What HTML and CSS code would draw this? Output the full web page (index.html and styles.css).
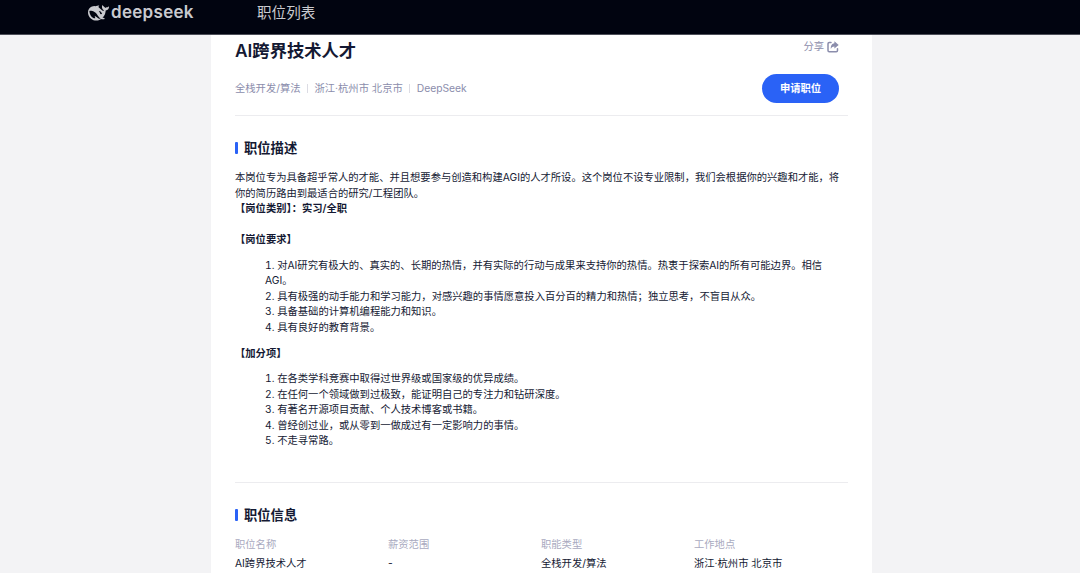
FILE: index.html
```
<!DOCTYPE html>
<html lang="zh-CN">
<head>
<meta charset="UTF-8">
<meta name="viewport" content="width=device-width, initial-scale=1.0">
<title>AI跨界技术人才</title>
<link rel="stylesheet" href="styles.css">
</head>
<body>
  <header class="header">
    <a class="logo">
      <svg class="logo-icon" viewBox="0 3.2 24 17.600">
        <path fill="currentColor" d="M23.748 4.482c-.254-.124-.364.113-.512.234-.051.039-.094.09-.137.136-.372.397-.806.657-1.373.626-.829-.046-1.537.214-2.163.848-.133-.782-.575-1.248-1.247-1.548-.352-.156-.708-.311-.955-.65-.172-.241-.219-.51-.305-.774-.055-.16-.11-.323-.293-.35-.2-.031-.278.136-.356.276-.313.572-.434 1.202-.422 1.84.027 1.436.633 2.58 1.838 3.393.137.093.172.187.129.323-.082.28-.18.552-.266.833-.055.179-.137.217-.329.14a5.526 5.526 0 01-1.736-1.18c-.857-.828-1.631-1.742-2.597-2.458a11.365 11.365 0 00-.689-.471c-.985-.957.13-1.743.388-1.836.27-.098.093-.432-.779-.428-.872.004-1.67.295-2.687.684a3.055 3.055 0 01-.465.137 9.597 9.597 0 00-2.883-.102c-1.885.21-3.39 1.102-4.497 2.623C.082 8.606-.231 10.684.152 12.85c.403 2.284 1.569 4.175 3.36 5.653 1.858 1.533 3.997 2.284 6.438 2.14 1.482-.085 3.133-.284 4.994-1.86.47.234.962.327 1.78.397.63.059 1.236-.03 1.705-.128.735-.156.684-.837.419-.961-2.155-1.004-1.682-.595-2.113-.926 1.096-1.296 2.746-2.642 3.392-7.003.05-.347.007-.565 0-.845-.004-.17.035-.237.23-.256a4.173 4.173 0 001.545-.475c1.396-.763 1.96-2.015 2.093-3.517.02-.23-.004-.467-.247-.588zM11.581 18c-2.089-1.642-3.102-2.183-3.52-2.16-.392.024-.321.471-.235.763.09.288.207.486.371.739.114.167.192.416-.113.603-.673.416-1.842-.14-1.897-.167-1.361-.802-2.5-1.86-3.301-3.307-.774-1.393-1.224-2.887-1.298-4.482-.02-.386.093-.522.477-.592a4.696 4.696 0 011.529-.039c2.132.312 3.946 1.265 5.468 2.774.868.86 1.525 1.887 2.202 2.891.72 1.066 1.494 2.082 2.48 2.914.348.292.625.514.891.677-.802.09-2.14.11-3.054-.614zm1-6.44a.306.306 0 01.415-.287.302.302 0 01.2.288.306.306 0 01-.31.307.303.303 0 01-.304-.308zm3.11 1.596c-.2.081-.399.151-.59.16a1.245 1.245 0 01-.798-.254c-.274-.23-.47-.358-.552-.758a1.73 1.73 0 01.016-.588c.07-.327-.008-.537-.239-.727-.187-.156-.426-.199-.688-.199a.559.559 0 01-.254-.078c-.11-.114-.2-.253-.114-.482.028-.054.16-.186.192-.21.356-.202.767-.136 1.146.016.352.144.618.408 1.001.782.391.451.462.576.685.914.176.265.336.537.445.848.067.195-.019.354-.25.452z"/>
      </svg>
      <span class="logo-text">deepseek</span>
    </a>
    <a class="nav-link">职位列表</a>
  </header>

  <main class="page">
    <div class="job-header">
      <div class="job-title-row">
        <h1>AI跨界技术人才</h1>
        <a class="share">分享
          <svg class="share-icon" viewBox="0 0 12 12" fill="none">
            <path stroke="currentColor" stroke-width="1.5" stroke-linecap="round" stroke-linejoin="round" d="M4 1.500H2.200Q1 1.500 1 2.700V9.600Q1 10.800 2.200 10.800H9.300Q10.500 10.800 10.500 9.600V7.800"/>
            <path fill="currentColor" d="M7.400.3 11.700 3.900 7.400 7.500V5.500C5.800 5.500 4.700 6.200 3.800 8 3.500 4.700 5 2.400 7.400 2.200z"/>
          </svg>
        </a>
      </div>
      <div class="job-meta-row">
        <div class="job-meta">
          <span>全栈开发/算法</span>
          <span>浙江·杭州市 北京市</span>
          <span>DeepSeek</span>
        </div>
        <button class="apply">申请职位</button>
      </div>
    </div>

    <section class="description">
      <h2>职位描述</h2>
      <div class="content">
        <p>本岗位专为具备超乎常人的才能、并且想要参与创造和构建AGI的人才所设。这个岗位不设专业限制，我们会根据你的兴趣和才能，将你的简历路由到最适合的研究/工程团队。</p>
        <p class="strong">【岗位类别】：实习/全职</p>
        <p class="strong sub">【岗位要求】</p>
        <ul>
          <li>1. 对AI研究有极大的、真实的、长期的热情，并有实际的行动与成果来支持你的热情。热衷于探索AI的所有可能边界。相信AGI。</li>
          <li>2. 具有极强的动手能力和学习能力，对感兴趣的事情愿意投入百分百的精力和热情；独立思考，不盲目从众。</li>
          <li>3. 具备基础的计算机编程能力和知识。</li>
          <li>4. 具有良好的教育背景。</li>
        </ul>
        <p class="strong">【加分项】</p>
        <ul>
          <li>1. 在各类学科竞赛中取得过世界级或国家级的优异成绩。</li>
          <li>2. 在任何一个领域做到过极致，能证明自己的专注力和钻研深度。</li>
          <li>3. 有著名开源项目贡献、个人技术博客或书籍。</li>
          <li>4. 曾经创过业，或从零到一做成过有一定影响力的事情。</li>
          <li>5. 不走寻常路。</li>
        </ul>
      </div>
    </section>

    <section class="info">
      <h2>职位信息</h2>
      <dl class="info-grid">
        <div><dt>职位名称</dt><dd>AI跨界技术人才</dd></div>
        <div><dt>薪资范围</dt><dd>-</dd></div>
        <div><dt>职能类型</dt><dd>全栈开发/算法</dd></div>
        <div><dt>工作地点</dt><dd>浙江·杭州市 北京市</dd></div>
      </dl>
    </section>
  </main>
</body>
</html>
```
FILE: styles.css
```
* {
  box-sizing: border-box;
}
body {
  margin: 0;
  height: 573px;
  overflow: hidden;
  background-color: #f3f3f5;
  color: #141933;
  font-family: Inter, "Noto Sans CJK SC", sans-serif;
  font-size: 10.3px;
  line-height: 15.5px;
}
h1, h2, p, ul, dl, dd {
  margin: 0;
  padding: 0;
}
.header {
  display: flex;
  align-items: flex-start;
  height: 35px;
  padding-left: 88px;
  background-color: #010410;
  border-bottom: 1px solid #4d4f59;
  color: #c9cacf;
}
.logo {
  display: flex;
  width: 169px;
  gap: 2px;
}
.logo-icon {
  width: 21px;
  height: 16px;
  margin-top: 5px;
}
.logo-text {
  font-size: 17px;
  font-weight: 600;
  letter-spacing: 0.3px;
  line-height: 25px;
}
.nav-link {
  font-size: 14.6px;
  line-height: 26px;
}
.page {
  width: 661px;
  height: 538px;
  margin-left: 211px;
  padding: 0 24px;
  overflow: hidden;
  background-color: #fff;
}
.job-header {
  height: 81px;
  border-bottom: 1px solid #ececef;
}
.job-title-row {
  display: flex;
  justify-content: space-between;
  padding-right: 9px;
}
h1 {
  font-size: 17.3px;
  font-weight: 600;
  line-height: 31px;
}
.share {
  display: flex;
  align-items: center;
  gap: 3px;
  height: 23px;
  color: #8b8dac;
}
.share-icon {
  width: 12px;
  height: 12px;
}
.job-meta-row {
  display: flex;
  justify-content: space-between;
  align-items: center;
  margin-top: 7.5px;
  padding-right: 9px;
}
.job-meta {
  display: flex;
  align-items: center;
  padding-top: 1px;
  color: #8b8dac;
}
.job-meta span + span {
  display: flex;
  align-items: center;
}
.job-meta span + span::before {
  content: "";
  width: 1px;
  height: 9px;
  margin: 0 7px 0 6px;
  background-color: #dcdce4;
}
.apply {
  width: 77px;
  height: 29.5px;
  padding: 0 0 1px;
  border: none;
  border-radius: 15px;
  background-color: #2a62f6;
  color: #fff;
  font-family: inherit;
  font-size: 10.3px;
  font-weight: 600;
}
h2 {
  display: flex;
  align-items: center;
  gap: 6px;
  font-size: 13.3px;
  font-weight: 600;
  line-height: 20px;
}
h2::before {
  content: "";
  width: 3px;
  height: 12px;
  border-radius: 1px;
  background-color: #2a62f6;
}
.description {
  height: 367px;
  padding-top: 22px;
  border-bottom: 1px solid #ececef;
}
.content {
  padding-top: 12px;
}
.content .strong {
  font-weight: 600;
}
.content .sub {
  margin-top: 15.5px;
}
.content ul {
  margin: 10.3px 0;
  padding: 0 4px 0 30px;
  list-style: none;
  font-variant-numeric: tabular-nums;
}
.info {
  padding-top: 22px;
}
.info-grid {
  display: grid;
  grid-template-columns: repeat(4, 153px);
  padding-top: 12px;
}
dt {
  color: #a9aac0;
}
dd {
  margin-top: 3px;
}
```
